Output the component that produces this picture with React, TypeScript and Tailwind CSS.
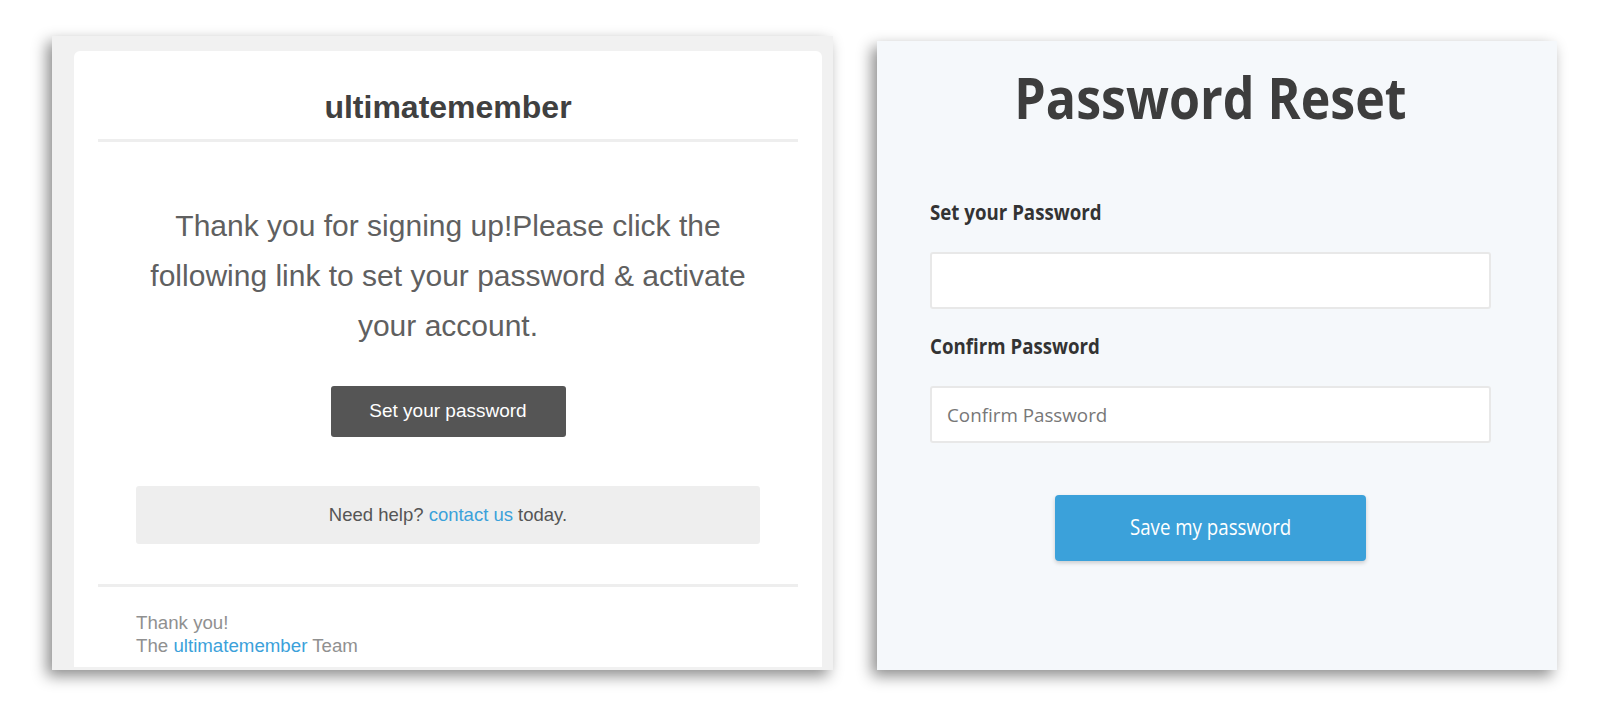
import React from 'react';

function WelcomeEmail() {
  return (
    <div className="ml-[52px] mt-[36px] w-[781px] h-[634px] shrink-0 bg-[#f1f1f1] pt-[15px] pl-[22px] pr-[11px] pb-[3px] flex flex-col overflow-hidden shadow-[-5px_6px_14px_rgba(0,0,0,0.45)] font-['Liberation_Sans',Arial,sans-serif]">
      <div className="flex-1 bg-white rounded-t-[6px] overflow-hidden">
        <div className="mx-6 pt-[38px] pb-[14px] border-b-[3px] border-[#eeeeee] text-center">
          <h1 className="text-[32px] leading-[36px] font-bold text-[#404040]">ultimatemember</h1>
        </div>

        <div className="px-[62px]">
          <p className="mt-[59px] text-[30px] leading-[50px] text-center text-[#606060]">
            Thank you for signing up!Please click the following link to set your password &amp; activate your account.
          </p>
          <div className="mt-[35px] flex justify-center">
            <button className="w-[235px] h-[51px] bg-[#555555] text-white text-[19px] rounded-[3px]">
              Set your password
            </button>
          </div>
          <div className="mt-[49px] h-[58px] bg-[#eeeeee] rounded-[3px] flex items-center justify-center text-[18.5px] text-[#555555]">
            <span>
              Need help? <a className="text-[#3ba1da]">contact us</a> today.
            </span>
          </div>
        </div>

        <div className="mx-6 mt-[40px] border-t-[3px] border-[#eeeeee]" />

        <div className="px-[62px] pt-[24px] text-[18.7px] leading-[23px] text-[#909090]">
          <div>Thank you!</div>
          <div>
            The <a className="text-[#3ba1da]">ultimatemember</a> Team
          </div>
        </div>
      </div>
    </div>
  );
}

function PasswordReset() {
  return (
    <div className="ml-[44px] mt-[41px] w-[680px] h-[629px] shrink-0 bg-[#f5f8fb] pt-[22px] shadow-[-5px_6px_14px_rgba(0,0,0,0.45)] font-['Open_Sans',sans-serif]">
      <div className="ml-[53px] w-[561px]">
        <h2 className="text-[57px] leading-[68px] font-bold text-[#3d3d3d] text-center scale-x-[0.88]">
          Password Reset
        </h2>

        <label className="block mt-[67px] text-[21px] leading-[28px] font-bold text-[#333333] origin-left scale-x-[0.89]">
          Set your Password
        </label>
        <input
          type="password"
          className="block mt-[26px] w-full h-[57px] bg-white border-2 border-[#e8e8e8] rounded-[3px] px-[15px] text-[19px] outline-none"
        />

        <label className="block mt-[23px] text-[21px] leading-[28px] font-bold text-[#333333] origin-left scale-x-[0.89]">
          Confirm Password
        </label>
        <input
          type="password"
          placeholder="Confirm Password"
          className="block mt-[26px] w-full h-[57px] bg-white border-2 border-[#e8e8e8] rounded-[3px] px-[15px] text-[18.8px] text-[#555] placeholder:text-[#777777] outline-none"
        />

        <div className="mt-[52px] flex justify-center">
          <button className="w-[311px] h-[66px] bg-[#3ba1da] rounded-[4px] text-white shadow-[0_2px_4px_rgba(0,0,0,0.18)]">
            <span className="inline-block text-[21px] scale-x-[0.89]">Save my password</span>
          </button>
        </div>
      </div>
    </div>
  );
}

export default function App() {
  return (
    <div className="w-[1602px] h-[708px] bg-white flex items-start overflow-hidden">
      <WelcomeEmail />
      <PasswordReset />
    </div>
  );
}
